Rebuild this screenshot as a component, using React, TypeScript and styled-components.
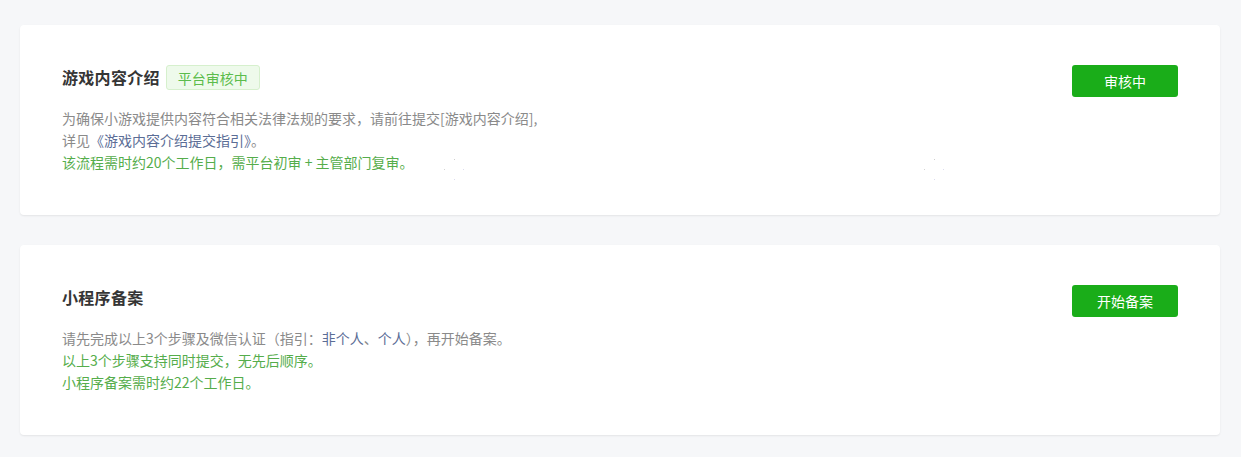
import React from 'react';
import styled, { createGlobalStyle } from 'styled-components';

const GlobalStyle = createGlobalStyle`
    html, body {
        margin: 0;
        padding: 0;
        background: #f6f7f9;
        font-family: "Noto Sans CJK SC", "Noto Sans", "Liberation Sans", sans-serif;
    }
`;

const Page = styled.div`
    display: flex;
    flex-direction: column;
    gap: 30px;
    padding: 25px 21px 22px 20px;
`;

const Card = styled.section`
    position: relative;
    display: flex;
    justify-content: space-between;
    align-items: flex-start;
    background: #fff;
    border-radius: 4px;
    box-shadow: 0 1px 2px rgba(0, 0, 0, 0.08);
    padding: 40px 42px 40px 42px;
    min-height: 110px;
`;

const Body = styled.div`
    display: flex;
    flex-direction: column;
`;

const TitleRow = styled.div`
    display: flex;
    align-items: center;
    height: 25px;
    margin-bottom: 17px;
`;

const Title = styled.h3`
    margin: 0;
    font-size: 16px;
    font-weight: 700;
    color: #353535;
    line-height: 25px;
    letter-spacing: 0.3px;
`;

const Tag = styled.span`
    margin-left: 6px;
    height: 23px;
    padding: 0 11px;
    display: inline-flex;
    align-items: center;
    font-size: 14px;
    color: #5cbc4c;
    background: #eefaeb;
    border: 1px solid #d6f0cd;
    border-radius: 3px;
`;

const Line = styled.p<{ $tone?: 'gray' | 'green' }>`
    margin: 0;
    font-size: 14px;
    line-height: 22px;
    color: ${p => (p.$tone === 'green' ? '#55ad4b' : '#8a8a8a')};
`;

const Link = styled.a`
    color: #5b6d96;
    text-decoration: none;
`;

const ActionButton = styled.button`
    width: 106px;
    height: 32px;
    border: none;
    border-radius: 3px;
    background: #1aad19;
    color: #fff;
    font-family: inherit;
    font-size: 14px;
    cursor: pointer;
`;

const Spark = styled.svg`
    position: absolute;
    width: 22px;
    height: 22px;
`;

const Sparkle = ({ left, top }: { left: number; top: number }) => (
    <Spark style={{ left, top }} viewBox="0 0 22 22">
        <rect x="10" y="0" width="1" height="1" fill="#cfcfcf" />
        <rect x="0" y="10" width="1" height="1" fill="#d4d4d4" />
        <rect x="19" y="10" width="1" height="1" fill="#dcdcee" />
        <rect x="10" y="20" width="1" height="1" fill="#dcdcee" />
    </Spark>
);

const App = () => {
    return (
        <>
            <GlobalStyle />
            <Page>
                <Card>
                    <Body>
                        <TitleRow>
                            <Title>游戏内容介绍</Title>
                            <Tag>平台审核中</Tag>
                        </TitleRow>
                        <Line>为确保小游戏提供内容符合相关法律法规的要求，请前往提交[游戏内容介绍],</Line>
                        <Line>
                            详见<Link href="#">《游戏内容介绍提交指引》</Link>。
                        </Line>
                        <Line $tone="green">该流程需时约20个工作日，需平台初审 + 主管部门复审。</Line>
                    </Body>
                    <ActionButton>审核中</ActionButton>
                    <Sparkle left={424} top={134} />
                    <Sparkle left={904} top={134} />
                </Card>
                <Card>
                    <Body>
                        <TitleRow>
                            <Title>小程序备案</Title>
                        </TitleRow>
                        <Line>
                            请先完成以上3个步骤及微信认证（指引：<Link href="#">非个人</Link>、<Link href="#">个人</Link>），再开始备案。
                        </Line>
                        <Line $tone="green">以上3个步骤支持同时提交，无先后顺序。</Line>
                        <Line $tone="green">小程序备案需时约22个工作日。</Line>
                    </Body>
                    <ActionButton>开始备案</ActionButton>
                </Card>
            </Page>
        </>
    );
};

export default App;
